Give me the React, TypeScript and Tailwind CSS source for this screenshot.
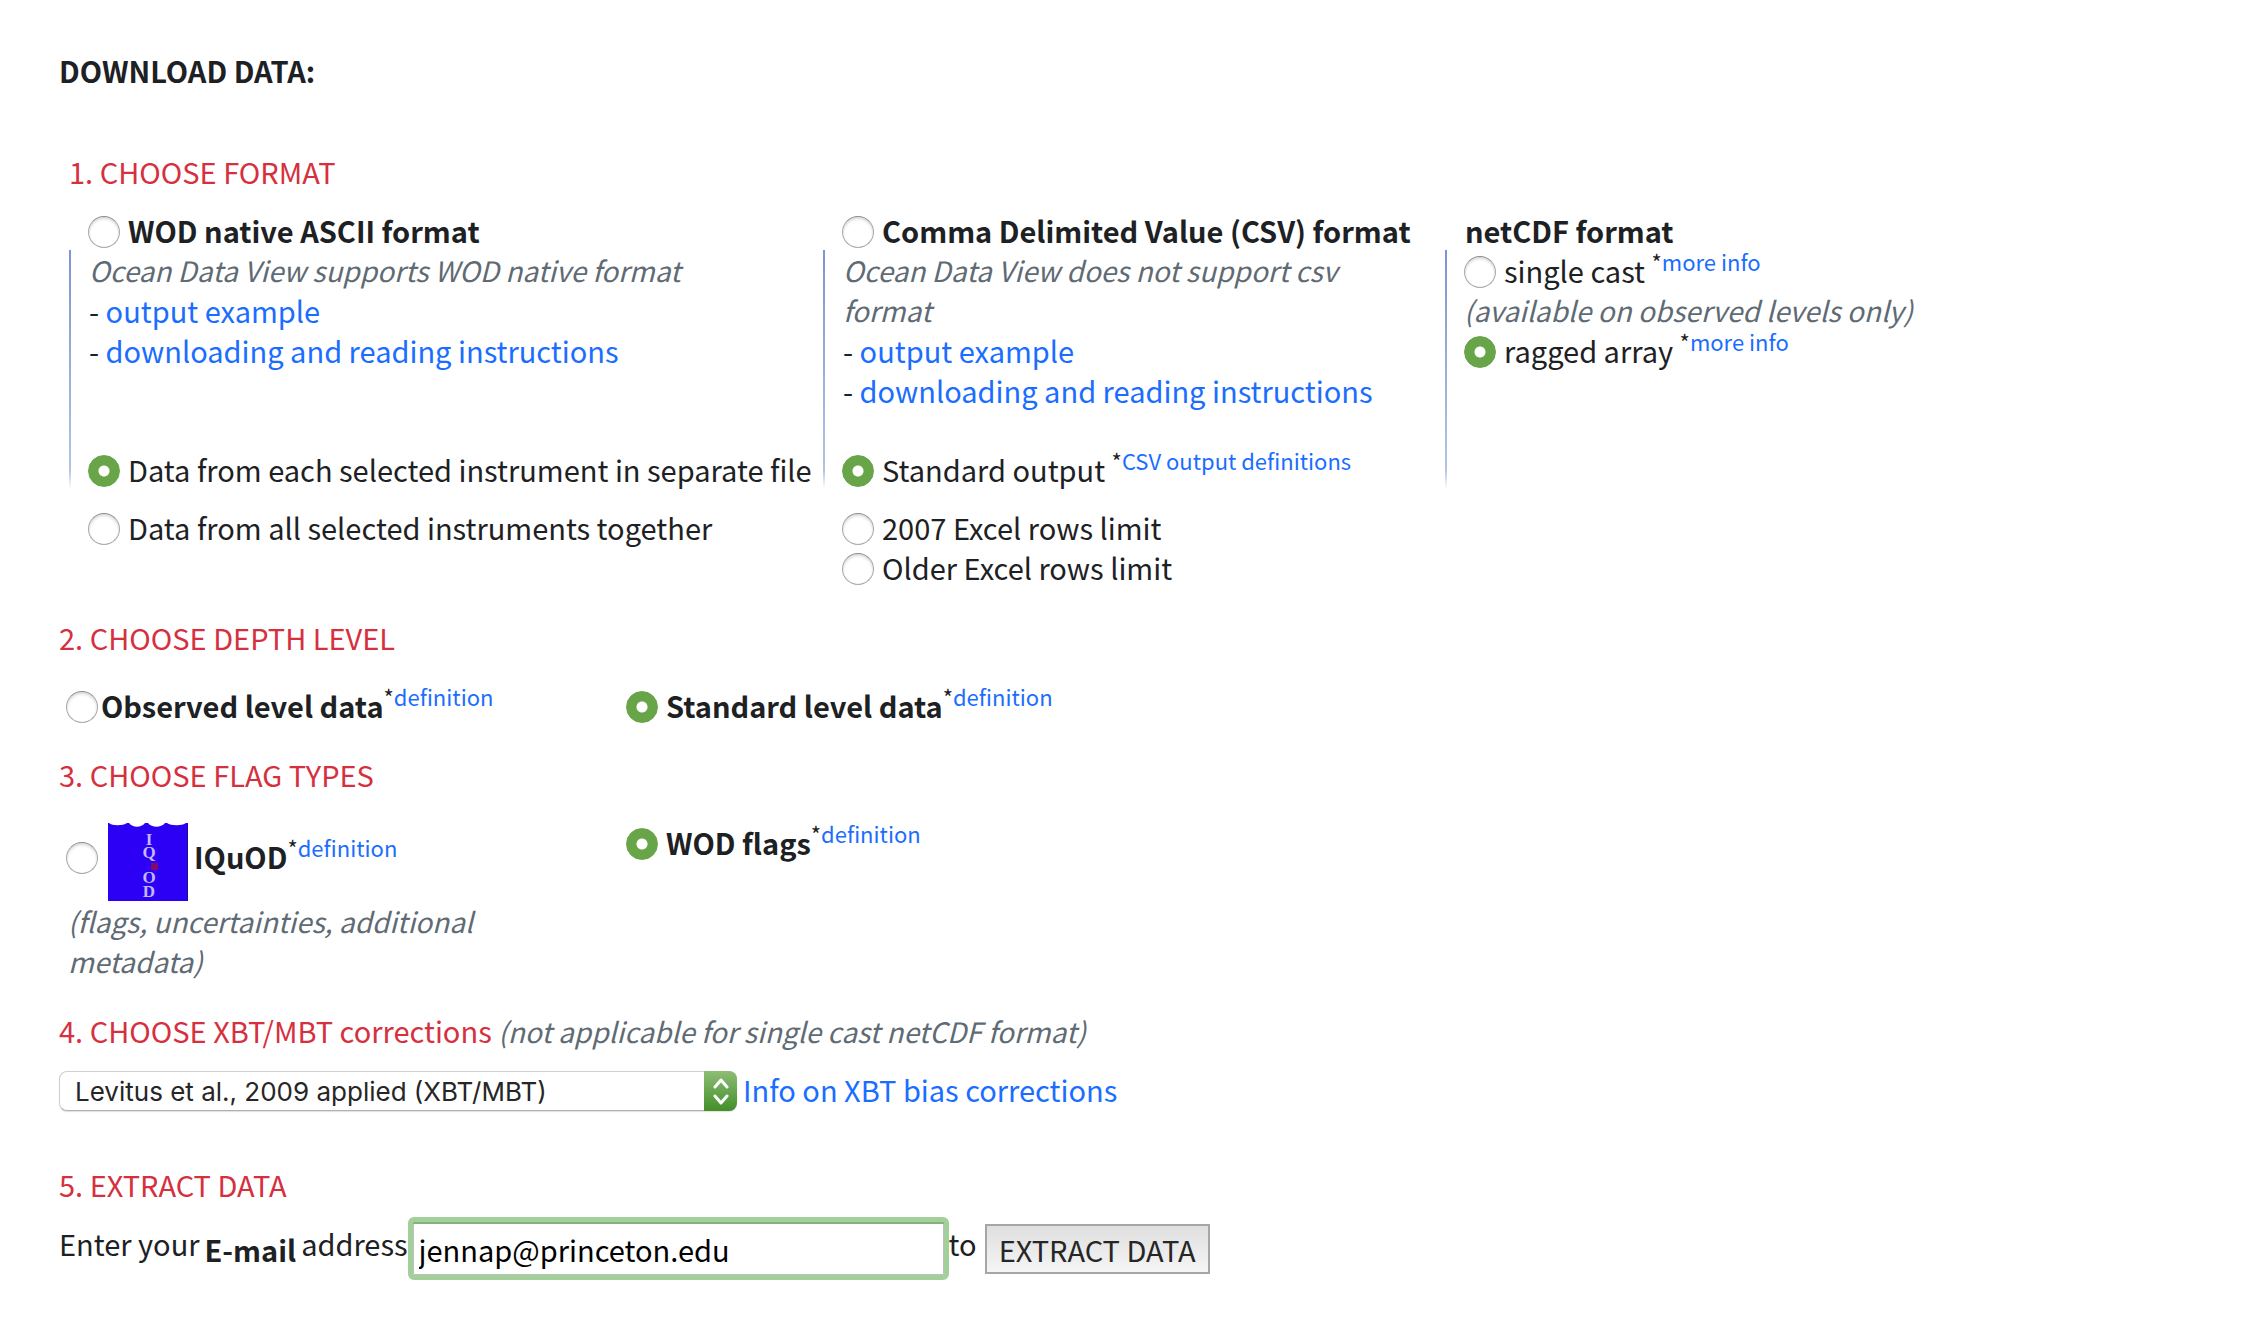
import type { ReactNode } from "react";

const note = "italic text-[28px] text-[#5f6b74]";

function Link({ children }: { children: ReactNode }) {
  return (
    <a href="#" className="text-[#1a6dff]">
      {children}
    </a>
  );
}

function Sup({ children }: { children: ReactNode }) {
  return (
    <sup className="-top-3 text-[22px] font-normal">
      *<Link>{children}</Link>
    </sup>
  );
}

type RadioProps = {
  id: string;
  name: string;
  checked?: boolean;
};

function Radio({ id, name, checked }: RadioProps) {
  return (
    <input
      type="radio"
      id={id}
      name={name}
      defaultChecked={checked}
      className="mt-[3px] size-8 shrink-0 appearance-none rounded-full border border-[#a9a9a9] border-t-[#8c8c8c] bg-white shadow-[inset_0_2px_3px_#d9d9d9] checked:border-[#68a548] checked:bg-[radial-gradient(circle_at_center,#fff_5px,#68a548_6px)] checked:shadow-none"
    />
  );
}

function Option({
  id,
  name,
  checked,
  bold,
  tight,
  label,
  info,
}: RadioProps & { bold?: boolean; tight?: boolean; label: string; info?: ReactNode }) {
  return (
    <div className={`flex items-center ${tight ? "gap-[3px]" : "gap-2"}`}>
      <Radio id={id} name={name} checked={checked} />
      <div className={bold ? "font-bold" : ""}>
        <label htmlFor={id}>{label}</label>
        {info}
      </div>
    </div>
  );
}

function Heading({ children }: { children: ReactNode }) {
  return <h2 className="text-[#d6303f]">{children}</h2>;
}

function FormatColumn({ header, children, extra }: { header: ReactNode; children: ReactNode; extra?: ReactNode }) {
  return (
    <div className="min-w-0">
      <div className="pl-[19px]">{header}</div>
      <div className="flex min-h-[239px] flex-col justify-between bg-[linear-gradient(to_bottom,#7b95ce,#b3c3e3_92%,#fff)] bg-[length:2px_100%] bg-no-repeat pr-1 pl-[19px]">
        {children}
      </div>
      <div className="pt-[18px] pl-[19px]">{extra}</div>
    </div>
  );
}

function DocLinks() {
  return (
    <ul className="pl-px">
      <li>
        - <Link>output example</Link>
      </li>
      <li>
        - <Link>downloading and reading instructions</Link>
      </li>
    </ul>
  );
}

function IquodLogo() {
  return (
    <svg viewBox="0 0 80 78" className="h-[78px] w-20 shrink-0" role="img" aria-label="IQuOD logo">
      <rect width="80" height="78" fill="#2b00f5" />
      <path
        d="M1 0C4 3 15 3 19 0ZM21 0C25 5 33 5 37 0ZM40 0C44 5 53 5 57 0ZM59 0C63 3 74 3 78 0Z"
        fill="#fff"
      />
      <path d="M79.500 2V78" stroke="#1c0c90" strokeWidth="1" />
      <g
        fill="#c4b8fb"
        fontFamily="'Liberation Serif', serif"
        fontSize="17"
        fontWeight="bold"
        textAnchor="middle"
      >
        <text x="41" y="22">I</text>
        <text x="41" y="35">Q</text>
        <text x="41" y="60">O</text>
        <text x="41" y="74">D</text>
      </g>
      <rect x="43" y="40" width="7" height="7" fill="#85086e" />
    </svg>
  );
}

export default function App() {
  return (
    <main className="min-h-screen bg-white pt-[50px] pb-12 pl-[59px] font-['Noto_Sans_CJK_SC',sans-serif] text-[29px] leading-[40px] text-[#1d2124]">
      <form onSubmit={(e) => e.preventDefault()}>
        <h1 className="font-bold">DOWNLOAD DATA:</h1>

        <section className="mt-[61px] pl-2.5">
          <Heading>1. CHOOSE FORMAT</Heading>
          <div className="mt-[19px] grid grid-cols-[754fr_622fr_811fr]">
            <FormatColumn
              header={<Option id="ascii" name="format" bold label="WOD native ASCII format" />}
              extra={<Option id="together" name="files" label="Data from all selected instruments together" />}
            >
              <div>
                <p className={`pl-px ${note}`}>Ocean Data View supports WOD native format</p>
                <DocLinks />
              </div>
              <Option id="separate" name="files" checked label="Data from each selected instrument in separate file" />
            </FormatColumn>

            <FormatColumn
              header={<Option id="csv" name="format" bold label="Comma Delimited Value (CSV) format" />}
              extra={
                <>
                  <Option id="excel2007" name="rows" label="2007 Excel rows limit" />
                  <Option id="excelold" name="rows" label="Older Excel rows limit" />
                </>
              }
            >
              <div>
                <p className={`pr-8 pl-px ${note}`}>Ocean Data View does not support csv format</p>
                <DocLinks />
              </div>
              <Option
                id="standardout"
                name="rows"
                checked
                label="Standard output"
                info={<> <Sup>CSV output definitions</Sup></>}
              />
            </FormatColumn>

            <FormatColumn header={<p className="pl-px font-bold">netCDF format</p>}>
              <div>
                <Option id="single" name="cast" label="single cast" info={<> <Sup>more info</Sup></>} />
                <p className={note}>(available on observed levels only)</p>
                <Option id="ragged" name="cast" checked label="ragged array" info={<> <Sup>more info</Sup></>} />
              </div>
            </FormatColumn>
          </div>
        </section>

        <section className="mt-[30px]">
          <Heading>2. CHOOSE DEPTH LEVEL</Heading>
          <div className="mt-7 grid grid-cols-[558fr_1639fr]">
            <div className="pl-[7px]">
              <Option id="observed" name="depth" bold tight label="Observed level data" info={<Sup>definition</Sup>} />
            </div>
            <div className="pl-[9px]">
              <Option id="standard" name="depth" checked bold label="Standard level data" info={<Sup>definition</Sup>} />
            </div>
          </div>
        </section>

        <section className="mt-[29px]">
          <Heading>3. CHOOSE FLAG TYPES</Heading>
          <div className="mt-7 grid grid-cols-[558fr_1639fr]">
            <div className="pt-px">
              <div className="flex items-start pl-[7px]">
                <div className="mt-[13px] flex h-10 items-center">
                  <Radio id="iquod" name="flags" />
                </div>
                <label htmlFor="iquod" className="ml-2.5">
                  <IquodLogo />
                </label>
                <div className="mt-[13px] ml-1.5 font-bold">
                  <label htmlFor="iquod">IQuOD</label>
                  <Sup>definition</Sup>
                </div>
              </div>
              <p className={`pr-8 pl-[9px] ${note}`}>(flags, uncertainties, additional metadata)</p>
            </div>
            <div className="pl-[9px]">
              <Option id="wod" name="flags" checked bold label="WOD flags" info={<Sup>definition</Sup>} />
            </div>
          </div>
        </section>

        <section className="mt-[29px]">
          <Heading>
            <label htmlFor="corrections">4. CHOOSE XBT/MBT corrections</label>{" "}
            <span className={note}>(not applicable for single cast netCDF format)</span>
          </Heading>
          <div className="mt-4 flex items-center gap-1.5">
            <div className="relative mt-1 w-[678px]">
              <select
                id="corrections"
                defaultValue="levitus"
                className="block h-10 w-full appearance-none rounded-lg border border-[#cfcfcf] border-b-[#b0b0b0] bg-white pt-0.5 pr-9 pl-[15px] font-['Inter',sans-serif] text-[26px] leading-[36px] text-[#262626] shadow-[0_1px_1px_#e0e0e0]"
              >
                <option value="levitus">Levitus et al., 2009 applied (XBT/MBT)</option>
              </select>
              <span className="pointer-events-none absolute inset-y-0 right-0 flex w-[33px] flex-col items-center justify-center rounded-r-lg bg-linear-to-b from-[#8dbd74] to-[#428f27] text-white">
                <svg viewBox="0 0 16 30" className="h-[30px] w-4" fill="none" stroke="currentColor" strokeWidth="3" strokeLinecap="round" strokeLinejoin="round">
                  <path d="M2 11L8 4L14 11M2 20L8 27L14 20" />
                </svg>
              </span>
            </div>
            <Link>Info on XBT bias corrections</Link>
          </div>
        </section>

        <section className="mt-[53px]">
          <Heading>5. EXTRACT DATA</Heading>
          <div className="mt-[13px] flex items-center">
            <label htmlFor="email" className="flex items-center gap-[5px]">
              <span className="pb-3">Enter your</span>
              <b>E-mail</b>
              <span className="pb-3">address</span>
            </label>
            <input
              id="email"
              type="email"
              defaultValue="jennap@princeton.edu"
              className="h-[63px] w-[541px] rounded-md border-[5px] border-[#a3cf9b] bg-white px-1.5 text-black shadow-[inset_0_2px_0_#86b17f,inset_0_0_0_1px_#b9c4b7] outline-none"
            />
            <span className="pb-3">to</span>
            <button
              type="submit"
              className="ml-2 h-[50px] border-2 border-[#a6a6a6] bg-linear-to-b from-[#dfdfdf] to-[#f5f5f5] px-3 text-[#262626]"
            >
              EXTRACT DATA
            </button>
          </div>
        </section>
      </form>
    </main>
  );
}
